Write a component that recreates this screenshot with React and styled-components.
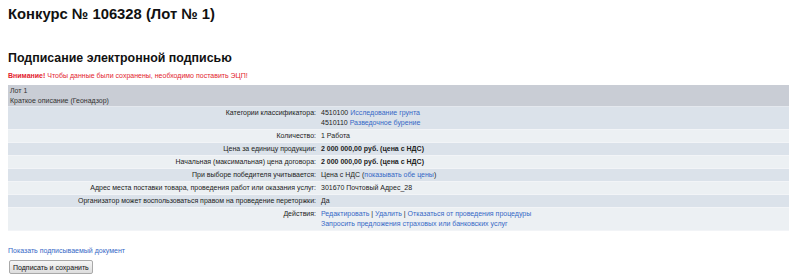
import React from "react";
import styled, { createGlobalStyle } from "styled-components";

const GlobalStyle = createGlobalStyle`
  body {
    margin: 0;
    background: #ffffff;
    font-family: "Liberation Sans", Arial, sans-serif;
    color: #222;
  }
`;

const Page = styled.div`
  padding: 6px 9px 0 8px;
`;

const Title = styled.h1`
  margin: 0;
  font-size: 14.8px;
  line-height: 16px;
  font-weight: bold;
  color: #111;
`;

const SubTitle = styled.h2`
  margin: 28px 0 0;
  font-size: 12.4px;
  line-height: 16px;
  font-weight: bold;
  color: #111;
`;

const Warning = styled.div`
  margin-top: 5px;
  font-size: 7px;
  line-height: 10px;
  color: #e3232e;

  b {
    font-weight: bold;
  }
`;

const Table = styled.table`
  margin-top: 4px;
  width: 781px;
  border-collapse: collapse;
  font-size: 7px;
  line-height: 10px;
  color: #222;
`;

const HeadCell = styled.td`
  background: #c9cdd5;
  padding: 1px 2px 0;
  color: #333;
  border-bottom: 1px solid #e4e8ee;
`;

const Row = styled.tr`
  background: ${(p) => (p.$odd ? "#dbe2ea" : "#ecf0f3")};
  border-bottom: 1px solid #f2f4f7;
`;

const Label = styled.td`
  width: 306px;
  text-align: right;
  vertical-align: top;
  padding: 1px 3px 1px 2px;
  white-space: nowrap;
`;

const Value = styled.td`
  vertical-align: top;
  padding: 1px 2px;
  font-weight: ${(p) => (p.$bold ? "bold" : "normal")};
`;

const A = styled.a`
  color: #3668c6;
  text-decoration: none;
  cursor: pointer;
`;

const Footer = styled.div`
  margin-top: 15px;
  display: flex;
  flex-direction: column;
  align-items: flex-start;
  gap: 4px;
  font-size: 7px;
  line-height: 10px;
`;

const Button = styled.button`
  margin-left: 1px;
  height: 14px;
  padding: 0 3px;
  font-family: "Liberation Sans", Arial, sans-serif;
  font-size: 7px;
  color: #111;
  background: linear-gradient(#f6f6f6, #dddddd);
  border: 1px solid #a9a9a9;
  border-radius: 2px;
`;

const rows = [
  {
    label: "Категории классификатора:",
    value: (
      <>
        4510100 <A>Исследование грунта</A>
        <br />
        4510110 <A>Разведочное бурение</A>
      </>
    ),
  },
  { label: "Количество:", value: "1 Работа" },
  { label: "Цена за единицу продукции:", value: "2 000 000,00 руб. (цена с НДС)", bold: true },
  {
    label: "Начальная (максимальная) цена договора:",
    value: "2 000 000,00 руб. (цена с НДС)",
    bold: true,
  },
  {
    label: "При выборе победителя учитывается:",
    value: (
      <>
        Цена с НДС (<A>показывать обе цены</A>)
      </>
    ),
  },
  {
    label: "Адрес места поставки товара, проведения работ или оказания услуг:",
    value: "301670 Почтовый Адрес_28",
  },
  {
    label: "Организатор может воспользоваться правом на проведение переторжки:",
    value: "Да",
  },
  {
    label: "Действия:",
    value: (
      <>
        <A>Редактировать</A> | <A>Удалить</A> | <A>Отказаться от проведения процедуры</A>
        <br />
        <A>Запросить предложения страховых или банковских услуг</A>
      </>
    ),
  },
];

export default function App() {
  return (
    <Page>
      <GlobalStyle />
      <Title>Конкурс № 106328 (Лот № 1)</Title>
      <SubTitle>Подписание электронной подписью</SubTitle>
      <Warning>
        <b>Внимание!</b> Чтобы данные были сохранены, необходимо поставить ЭЦП!
      </Warning>
      <Table>
        <tbody>
          <tr>
            <HeadCell colSpan={2}>
              Лот 1
              <br />
              Краткое описание (Геонадзор)
            </HeadCell>
          </tr>
          {rows.map((r, i) => (
            <Row key={i} $odd={i % 2 === 0}>
              <Label>{r.label}</Label>
              <Value $bold={r.bold}>{r.value}</Value>
            </Row>
          ))}
        </tbody>
      </Table>
      <Footer>
        <A>Показать подписываемый документ</A>
        <Button>Подписать и сохранить</Button>
      </Footer>
    </Page>
  );
}
